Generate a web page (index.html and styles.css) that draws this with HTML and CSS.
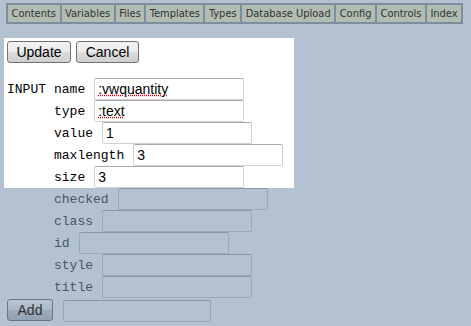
FILE: index.html
```
<!DOCTYPE html>
<html>
<head>
    <title>Input Editor</title>
    <link rel="stylesheet" href="styles.css">
</head>
<body>
    <div class="tabs">
        <span class="tab">Contents</span>
        <span class="tab">Variables</span>
        <span class="tab">Files</span>
        <span class="tab">Templates</span>
        <span class="tab">Types</span>
        <span class="tab">Database Upload</span>
        <span class="tab">Config</span>
        <span class="tab">Controls</span>
        <span class="tab">Index</span>
    </div>

    <div class="panel">
        <div class="actions">
            <button class="btn update">Update</button>
            <button class="btn cancel">Cancel</button>
        </div>
        <div class="attr first">
            <span class="tag">INPUT</span>
            <span class="name">name</span>
            <input class="field spell" type="text" value=":vwquantity">
        </div>
        <div class="attr">
            <span class="tag"></span>
            <span class="name">type</span>
            <input class="field spell" type="text" value=":text">
        </div>
        <div class="attr">
            <span class="tag"></span>
            <span class="name">value</span>
            <input class="field" type="text" value="1">
        </div>
        <div class="attr">
            <span class="tag"></span>
            <span class="name">maxlength</span>
            <input class="field" type="text" value="3">
        </div>
        <div class="attr">
            <span class="tag"></span>
            <span class="name">size</span>
            <input class="field" type="text" value="3">
        </div>
    </div>

    <div class="rest">
        <div class="attr">
            <span class="tag"></span>
            <span class="name">checked</span>
            <input class="field" type="text">
        </div>
        <div class="attr">
            <span class="tag"></span>
            <span class="name">class</span>
            <input class="field" type="text">
        </div>
        <div class="attr">
            <span class="tag"></span>
            <span class="name">id</span>
            <input class="field" type="text">
        </div>
        <div class="attr">
            <span class="tag"></span>
            <span class="name">style</span>
            <input class="field" type="text">
        </div>
        <div class="attr">
            <span class="tag"></span>
            <span class="name">title</span>
            <input class="field" type="text">
        </div>
        <div class="add-row">
            <button class="btn">Add</button>
            <input class="field" type="text">
        </div>
    </div>
</body>
</html>
```

FILE: styles.css
```
/* Page */
body {
    margin: 0;
    background-color: #b3c1d1;
    font-family: "Liberation Sans", Arial, sans-serif;
}

/* Tab bar */
.tabs {
    display: flex;
    margin: 3px 0 0 6px;
    width: max-content;
    background-color: #7d8d9d;
    gap: 2px;
    padding: 2px;
}

.tab {
    font-family: "DejaVu Sans Condensed", "DejaVu Sans", sans-serif;
    font-stretch: condensed;
    font-size: 11px;
    line-height: 17px;
    padding: 0 3.5px;
    color: #333;
    background-color: #b1bdb2;
}

/* White editing panel */
.panel {
    margin: 14px 0 0 4px;
    width: 290px;
    padding: 3px 0 0 3px;
    box-sizing: border-box;
    height: 150px;
    background-color: #fff;
}

.actions {
    display: flex;
    gap: 5px;
    margin-bottom: 15px;
}

.btn {
    font-family: "Liberation Sans", Arial, sans-serif;
    font-size: 14px;
    height: 22px;
    padding: 0;
    color: #000;
    border: 1px solid #707070;
    border-radius: 3px;
    background: linear-gradient(#f2f2f2, #ebebeb 50%, #dddddd 50%, #cfcfcf);
}

.update {
    width: 64px;
}

.cancel {
    width: 63px;
}

.attr {
    display: flex;
    align-items: center;
    height: 22px;
    font-family: "Liberation Mono", "Courier New", monospace;
    font-size: 13px;
    color: #000;
}

.tag {
    width: 47px;
    flex: none;
}

.field {
    box-sizing: border-box;
    width: 150px;
    height: 22px;
    margin: 0 0 0 9px;
    padding: 0 3px;
    font-family: "Liberation Sans", Arial, sans-serif;
    font-size: 14px;
    color: #000;
    background-color: #fff;
    border: 1px solid #d0d0d0;
    border-top-color: #a8a8a8;
    border-radius: 2px;
}

.spell {
    text-decoration: underline dotted #c00;
}

/* Rows below the panel, shown dimmed */
.rest {
    padding-left: 7px;
}

.rest .attr {
    color: #4b5663;
}

.rest .field {
    background-color: #b3c1d1;
    border-color: #9aa9b9;
    border-top-color: #8797a8;
}

.add-row {
    display: flex;
    align-items: flex-start;
    margin-top: 1px;
}

.add-row .btn {
    width: 46px;
    color: #333;
    border-color: #66768a;
    background: linear-gradient(#b8c5d4, #aab7c6 50%, #9dabbb 50%, #93a2b3);
}

.add-row .field {
    margin: 1px 0 0 10px;
    width: 148px;
}
```
